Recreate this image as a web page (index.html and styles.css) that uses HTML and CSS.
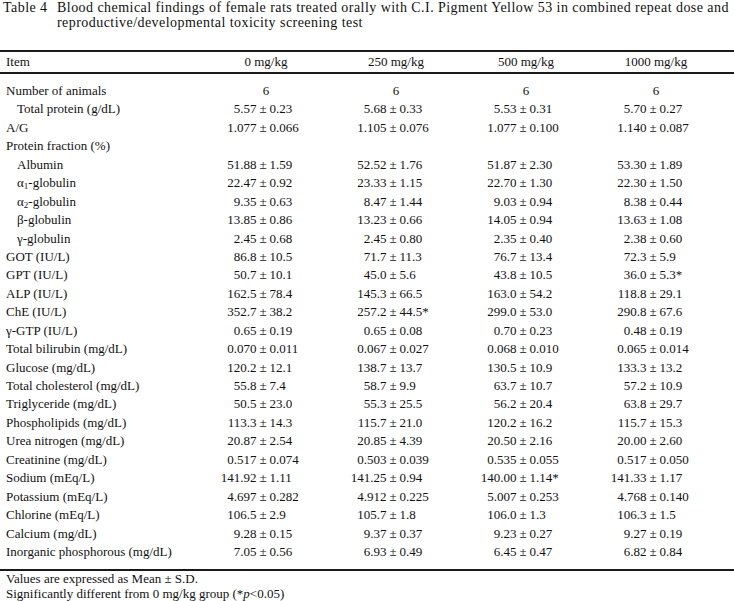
FILE: index.html
```html
<!DOCTYPE html>
<html lang="en">
<head>
<meta charset="utf-8">
<title>Table 4</title>
<link rel="stylesheet" href="styles.css">
</head>
<body>
<div class="caption">
  <div class="label">Table 4</div>
  <div class="ctext">Blood chemical findings of female rats treated orally with C.I. Pigment Yellow 53 in combined repeat dose and<br>reproductive/developmental toxicity screening test</div>
</div>

<div class="tbl">
  <div class="row head">
    <div class="item">Item</div>
    <div class="c">0 mg/kg</div>
    <div class="c">250 mg/kg</div>
    <div class="c">500 mg/kg</div>
    <div class="c">1000 mg/kg</div>
  </div>
  <div class="body">
    <div class="row"><div class="item">Number of animals</div><div class="c">6</div><div class="c">6</div><div class="c">6</div><div class="c">6</div></div>
    <div class="row"><div class="item ind">Total protein (g/dL)</div>
      <div class="v"><span class="m">5.57</span><span class="pm">±</span><span class="s">0.23</span></div>
      <div class="v"><span class="m">5.68</span><span class="pm">±</span><span class="s">0.33</span></div>
      <div class="v"><span class="m">5.53</span><span class="pm">±</span><span class="s">0.31</span></div>
      <div class="v"><span class="m">5.70</span><span class="pm">±</span><span class="s">0.27</span></div></div>
    <div class="row"><div class="item">A/G</div>
      <div class="v"><span class="m">1.077</span><span class="pm">±</span><span class="s">0.066</span></div>
      <div class="v"><span class="m">1.105</span><span class="pm">±</span><span class="s">0.076</span></div>
      <div class="v"><span class="m">1.077</span><span class="pm">±</span><span class="s">0.100</span></div>
      <div class="v"><span class="m">1.140</span><span class="pm">±</span><span class="s">0.087</span></div></div>
    <div class="row"><div class="item">Protein fraction (%)</div><div></div><div></div><div></div><div></div></div>
    <div class="row"><div class="item ind">Albumin</div>
      <div class="v"><span class="m">51.88</span><span class="pm">±</span><span class="s">1.59</span></div>
      <div class="v"><span class="m">52.52</span><span class="pm">±</span><span class="s">1.76</span></div>
      <div class="v"><span class="m">51.87</span><span class="pm">±</span><span class="s">2.30</span></div>
      <div class="v"><span class="m">53.30</span><span class="pm">±</span><span class="s">1.89</span></div></div>
    <div class="row"><div class="item ind">α<span class="sub">1</span>-globulin</div>
      <div class="v"><span class="m">22.47</span><span class="pm">±</span><span class="s">0.92</span></div>
      <div class="v"><span class="m">23.33</span><span class="pm">±</span><span class="s">1.15</span></div>
      <div class="v"><span class="m">22.70</span><span class="pm">±</span><span class="s">1.30</span></div>
      <div class="v"><span class="m">22.30</span><span class="pm">±</span><span class="s">1.50</span></div></div>
    <div class="row"><div class="item ind">α<span class="sub">2</span>-globulin</div>
      <div class="v"><span class="m">9.35</span><span class="pm">±</span><span class="s">0.63</span></div>
      <div class="v"><span class="m">8.47</span><span class="pm">±</span><span class="s">1.44</span></div>
      <div class="v"><span class="m">9.03</span><span class="pm">±</span><span class="s">0.94</span></div>
      <div class="v"><span class="m">8.38</span><span class="pm">±</span><span class="s">0.44</span></div></div>
    <div class="row"><div class="item ind">β-globulin</div>
      <div class="v"><span class="m">13.85</span><span class="pm">±</span><span class="s">0.86</span></div>
      <div class="v"><span class="m">13.23</span><span class="pm">±</span><span class="s">0.66</span></div>
      <div class="v"><span class="m">14.05</span><span class="pm">±</span><span class="s">0.94</span></div>
      <div class="v"><span class="m">13.63</span><span class="pm">±</span><span class="s">1.08</span></div></div>
    <div class="row"><div class="item ind">γ-globulin</div>
      <div class="v"><span class="m">2.45</span><span class="pm">±</span><span class="s">0.68</span></div>
      <div class="v"><span class="m">2.45</span><span class="pm">±</span><span class="s">0.80</span></div>
      <div class="v"><span class="m">2.35</span><span class="pm">±</span><span class="s">0.40</span></div>
      <div class="v"><span class="m">2.38</span><span class="pm">±</span><span class="s">0.60</span></div></div>
    <div class="row"><div class="item">GOT (IU/L)</div>
      <div class="v"><span class="m">86.8</span><span class="pm">±</span><span class="s">10.5</span></div>
      <div class="v"><span class="m">71.7</span><span class="pm">±</span><span class="s">11.3</span></div>
      <div class="v"><span class="m">76.7</span><span class="pm">±</span><span class="s">13.4</span></div>
      <div class="v"><span class="m">72.3</span><span class="pm">±</span><span class="s">5.9</span></div></div>
    <div class="row"><div class="item">GPT (IU/L)</div>
      <div class="v"><span class="m">50.7</span><span class="pm">±</span><span class="s">10.1</span></div>
      <div class="v"><span class="m">45.0</span><span class="pm">±</span><span class="s">5.6</span></div>
      <div class="v"><span class="m">43.8</span><span class="pm">±</span><span class="s">10.5</span></div>
      <div class="v"><span class="m">36.0</span><span class="pm">±</span><span class="s">5.3*</span></div></div>
    <div class="row"><div class="item">ALP (IU/L)</div>
      <div class="v"><span class="m">162.5</span><span class="pm">±</span><span class="s">78.4</span></div>
      <div class="v"><span class="m">145.3</span><span class="pm">±</span><span class="s">66.5</span></div>
      <div class="v"><span class="m">163.0</span><span class="pm">±</span><span class="s">54.2</span></div>
      <div class="v"><span class="m">118.8</span><span class="pm">±</span><span class="s">29.1</span></div></div>
    <div class="row"><div class="item">ChE (IU/L)</div>
      <div class="v"><span class="m">352.7</span><span class="pm">±</span><span class="s">38.2</span></div>
      <div class="v"><span class="m">257.2</span><span class="pm">±</span><span class="s">44.5*</span></div>
      <div class="v"><span class="m">299.0</span><span class="pm">±</span><span class="s">53.0</span></div>
      <div class="v"><span class="m">290.8</span><span class="pm">±</span><span class="s">67.6</span></div></div>
    <div class="row"><div class="item">γ-GTP (IU/L)</div>
      <div class="v"><span class="m">0.65</span><span class="pm">±</span><span class="s">0.19</span></div>
      <div class="v"><span class="m">0.65</span><span class="pm">±</span><span class="s">0.08</span></div>
      <div class="v"><span class="m">0.70</span><span class="pm">±</span><span class="s">0.23</span></div>
      <div class="v"><span class="m">0.48</span><span class="pm">±</span><span class="s">0.19</span></div></div>
    <div class="row"><div class="item">Total bilirubin (mg/dL)</div>
      <div class="v"><span class="m">0.070</span><span class="pm">±</span><span class="s">0.011</span></div>
      <div class="v"><span class="m">0.067</span><span class="pm">±</span><span class="s">0.027</span></div>
      <div class="v"><span class="m">0.068</span><span class="pm">±</span><span class="s">0.010</span></div>
      <div class="v"><span class="m">0.065</span><span class="pm">±</span><span class="s">0.014</span></div></div>
    <div class="row"><div class="item">Glucose (mg/dL)</div>
      <div class="v"><span class="m">120.2</span><span class="pm">±</span><span class="s">12.1</span></div>
      <div class="v"><span class="m">138.7</span><span class="pm">±</span><span class="s">13.7</span></div>
      <div class="v"><span class="m">130.5</span><span class="pm">±</span><span class="s">10.9</span></div>
      <div class="v"><span class="m">133.3</span><span class="pm">±</span><span class="s">13.2</span></div></div>
    <div class="row"><div class="item">Total cholesterol (mg/dL)</div>
      <div class="v"><span class="m">55.8</span><span class="pm">±</span><span class="s">7.4</span></div>
      <div class="v"><span class="m">58.7</span><span class="pm">±</span><span class="s">9.9</span></div>
      <div class="v"><span class="m">63.7</span><span class="pm">±</span><span class="s">10.7</span></div>
      <div class="v"><span class="m">57.2</span><span class="pm">±</span><span class="s">10.9</span></div></div>
    <div class="row"><div class="item">Triglyceride (mg/dL)</div>
      <div class="v"><span class="m">50.5</span><span class="pm">±</span><span class="s">23.0</span></div>
      <div class="v"><span class="m">55.3</span><span class="pm">±</span><span class="s">25.5</span></div>
      <div class="v"><span class="m">56.2</span><span class="pm">±</span><span class="s">20.4</span></div>
      <div class="v"><span class="m">63.8</span><span class="pm">±</span><span class="s">29.7</span></div></div>
    <div class="row"><div class="item">Phospholipids (mg/dL)</div>
      <div class="v"><span class="m">113.3</span><span class="pm">±</span><span class="s">14.3</span></div>
      <div class="v"><span class="m">115.7</span><span class="pm">±</span><span class="s">21.0</span></div>
      <div class="v"><span class="m">120.2</span><span class="pm">±</span><span class="s">16.2</span></div>
      <div class="v"><span class="m">115.7</span><span class="pm">±</span><span class="s">15.3</span></div></div>
    <div class="row"><div class="item">Urea nitrogen (mg/dL)</div>
      <div class="v"><span class="m">20.87</span><span class="pm">±</span><span class="s">2.54</span></div>
      <div class="v"><span class="m">20.85</span><span class="pm">±</span><span class="s">4.39</span></div>
      <div class="v"><span class="m">20.50</span><span class="pm">±</span><span class="s">2.16</span></div>
      <div class="v"><span class="m">20.00</span><span class="pm">±</span><span class="s">2.60</span></div></div>
    <div class="row"><div class="item">Creatinine (mg/dL)</div>
      <div class="v"><span class="m">0.517</span><span class="pm">±</span><span class="s">0.074</span></div>
      <div class="v"><span class="m">0.503</span><span class="pm">±</span><span class="s">0.039</span></div>
      <div class="v"><span class="m">0.535</span><span class="pm">±</span><span class="s">0.055</span></div>
      <div class="v"><span class="m">0.517</span><span class="pm">±</span><span class="s">0.050</span></div></div>
    <div class="row"><div class="item">Sodium (mEq/L)</div>
      <div class="v"><span class="m">141.92</span><span class="pm">±</span><span class="s">1.11</span></div>
      <div class="v"><span class="m">141.25</span><span class="pm">±</span><span class="s">0.94</span></div>
      <div class="v"><span class="m">140.00</span><span class="pm">±</span><span class="s">1.14*</span></div>
      <div class="v"><span class="m">141.33</span><span class="pm">±</span><span class="s">1.17</span></div></div>
    <div class="row"><div class="item">Potassium (mEq/L)</div>
      <div class="v"><span class="m">4.697</span><span class="pm">±</span><span class="s">0.282</span></div>
      <div class="v"><span class="m">4.912</span><span class="pm">±</span><span class="s">0.225</span></div>
      <div class="v"><span class="m">5.007</span><span class="pm">±</span><span class="s">0.253</span></div>
      <div class="v"><span class="m">4.768</span><span class="pm">±</span><span class="s">0.140</span></div></div>
    <div class="row"><div class="item">Chlorine (mEq/L)</div>
      <div class="v"><span class="m">106.5</span><span class="pm">±</span><span class="s">2.9</span></div>
      <div class="v"><span class="m">105.7</span><span class="pm">±</span><span class="s">1.8</span></div>
      <div class="v"><span class="m">106.0</span><span class="pm">±</span><span class="s">1.3</span></div>
      <div class="v"><span class="m">106.3</span><span class="pm">±</span><span class="s">1.5</span></div></div>
    <div class="row"><div class="item">Calcium (mg/dL)</div>
      <div class="v"><span class="m">9.28</span><span class="pm">±</span><span class="s">0.15</span></div>
      <div class="v"><span class="m">9.37</span><span class="pm">±</span><span class="s">0.37</span></div>
      <div class="v"><span class="m">9.23</span><span class="pm">±</span><span class="s">0.27</span></div>
      <div class="v"><span class="m">9.27</span><span class="pm">±</span><span class="s">0.19</span></div></div>
    <div class="row"><div class="item">Inorganic phosphorous (mg/dL)</div>
      <div class="v"><span class="m">7.05</span><span class="pm">±</span><span class="s">0.56</span></div>
      <div class="v"><span class="m">6.93</span><span class="pm">±</span><span class="s">0.49</span></div>
      <div class="v"><span class="m">6.45</span><span class="pm">±</span><span class="s">0.47</span></div>
      <div class="v"><span class="m">6.82</span><span class="pm">±</span><span class="s">0.84</span></div></div>
  </div>
</div>

<div class="notes">
  <div>Values are expressed as Mean ± S.D.</div>
  <div>Significantly different from 0 mg/kg group (*<i>p</i>&lt;0.05)</div>
</div>
</body>
</html>
```

FILE: styles.css
```css
html, body {
  margin: 0;
  padding: 0;
  background: #ffffff;
}
body {
  font-family: "Liberation Serif", "Times New Roman", serif;
  font-size: 13px;
  color: #111111;
}
.caption {
  display: grid;
  grid-template-columns: 54px 1fr;
  padding-left: 3px;
  font-size: 14px;
  letter-spacing: 0.45px;
  line-height: 15px;
  white-space: nowrap;
}
.tbl {
  margin-top: 20px;
  border-top: 2px solid #1a1a1a;
  border-bottom: 2px solid #1a1a1a;
}
.row {
  display: grid;
  grid-template-columns: 201px repeat(4, 130px) 1fr;
  height: 18.44px;
  line-height: 18.44px;
  white-space: nowrap;
}
.row.head {
  height: 20px;
  line-height: 20px;
  border-bottom: 2px solid #1a1a1a;
}
.body {
  padding: 8px 0 7.6px;
}
.item {
  padding-left: 6px;
}
.item.ind {
  padding-left: 17px;
}
.c {
  text-align: center;
}
.v {
  display: grid;
  grid-template-columns: 1fr auto 1fr;
  column-gap: 3px;
  padding-right: 6px;
}
.m {
  text-align: right;
}
.s {
  text-align: left;
}
.sub {
  font-size: 9px;
  vertical-align: -2px;
  line-height: 0;
}
.notes {
  line-height: 15px;
  padding-left: 6px;
}
```
